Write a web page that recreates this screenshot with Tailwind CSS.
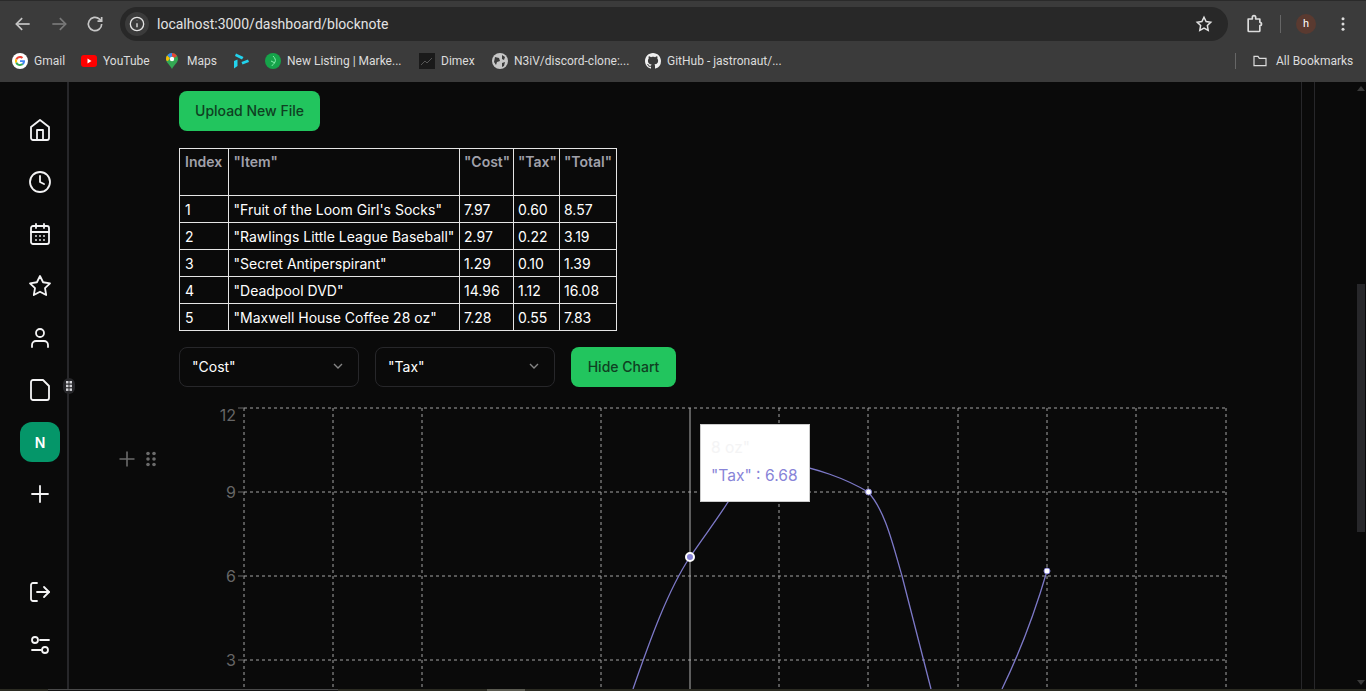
<!DOCTYPE html>
<html lang="en">

<head>
    <meta charset="UTF-8">
    <meta name="viewport" content="width=device-width, initial-scale=1.0">
    <title>Blocknote Dashboard</title>
    <script src="https://cdn.jsdelivr.net/npm/@tailwindcss/browser@4"></script>
</head>

<body class="h-[691px] overflow-hidden bg-[#0a0a0a] font-['Inter',sans-serif]">
    <!-- Browser toolbar -->
    <header class="h-[82px] bg-[#3b3b3b] border-t border-[#2a2a2a] font-['Roboto',sans-serif]">
        <div class="h-[46px] flex items-center">
            <div class="flex items-center gap-[16px] pl-[13px] w-[120px] text-[#c7c7c7]">
                <svg class="w-[20px] h-[20px]" viewBox="0 0 24 24" fill="none" stroke="currentColor" stroke-width="2"><path d="M20 12H5"/><path d="m11 5-7 7 7 7"/></svg>
                <svg class="w-[20px] h-[20px] text-[#7a7a7a]" viewBox="0 0 24 24" fill="none" stroke="currentColor" stroke-width="2"><path d="M4 12h15"/><path d="m13 5 7 7-7 7"/></svg>
                <svg class="w-[20px] h-[20px]" viewBox="0 0 24 24" fill="none" stroke="currentColor" stroke-width="2"><path d="M20 12a8 8 0 1 1-2.500-5.800L20 8.500"/><path d="M20 3.500v5h-5"/></svg>
            </div>
            <div class="w-[1108px] h-[34px] rounded-full bg-[#282828] flex items-center pl-[5px] pr-[15px]">
                <div class="w-[24px] h-[24px] rounded-full bg-[#3b3b3b] flex items-center justify-center text-[#e3e3e3]">
                    <svg class="w-[16px] h-[16px]" viewBox="0 0 24 24" fill="none" stroke="currentColor" stroke-width="2"><circle cx="12" cy="12" r="10"/><path d="M12 11v6"/><path d="M12 7v.5"/></svg>
                </div>
                <span class="ml-[8px] text-[14px] text-[#e3e3e3]">localhost:3000/dashboard/blocknote</span>
                <svg class="ml-auto w-[18px] h-[18px] text-[#e3e3e3]" viewBox="0 0 24 24" fill="none" stroke="currentColor" stroke-width="2"><path d="m12 3 2.800 5.800 6.200.9-4.500 4.400 1.100 6.400-5.600-3-5.600 3 1.100-6.400L3 9.700l6.200-.9z"/></svg>
            </div>
            <div class="flex items-center flex-1 pl-[16px] text-[#dcdcdc]">
                <svg class="w-[20px] h-[20px]" viewBox="0 0 24 24" fill="none" stroke="currentColor" stroke-width="2" stroke-linejoin="round"><path d="M5 6h5V4a2 2 0 0 1 4 0v2h5v4a2 2 0 0 1 0 4v6a1 1 0 0 1-1 1H6a1 1 0 0 1-1-1z"/></svg>
                <div class="w-px h-[18px] bg-[#666] ml-[16px]"></div>
                <div class="w-[20px] h-[20px] rounded-full bg-[#5a3a30] ml-[15px] flex items-center justify-center text-[11px] text-white">h</div>
                <svg class="ml-[18px] w-[18px] h-[18px]" viewBox="0 0 24 24" fill="currentColor"><circle cx="12" cy="5" r="2"/><circle cx="12" cy="12" r="2"/><circle cx="12" cy="19" r="2"/></svg>
            </div>
        </div>

        <!-- Bookmarks bar -->
        <div class="h-[35px] flex items-center pl-[12px] pb-[8px] text-[12px] text-[#dcdcdc] whitespace-nowrap">
            <svg class="w-[16px] h-[16px]" viewBox="0 0 48 48"><circle cx="24" cy="24" r="24" fill="#fff"/><path fill="#ea4335" d="M24 9c4 0 7 1.400 9.500 3.700l-4.300 4.300C27.800 15.700 26 15 24 15c-4 0-7.300 2.700-8.500 6.300l-5-3.900C13 12.500 18 9 24 9z"/><path fill="#4285f4" d="M39 24.500c0-1.200-.1-2-.3-3H24v5.700h8.400c-.4 2-1.500 3.500-3.100 4.600l4.800 3.700c2.900-2.700 4.900-6.500 4.900-11z"/><path fill="#fbbc05" d="M15.500 26.700c-.6-1.800-.6-3.600 0-5.400l-5-3.900c-2 4.100-2 9.100 0 13.200z"/><path fill="#34a853" d="M24 39c4 0 7.500-1.300 10.100-3.500l-4.800-3.700c-1.400.9-3.200 1.500-5.300 1.500-4 0-7.300-2.700-8.500-6.600l-5 3.900C13 35.500 18 39 24 39z"/></svg>
            <span class="ml-[6px] w-[30px]">Gmail</span>
            <svg class="ml-[17px] w-[16px] h-[12px]" viewBox="0 0 16 12"><rect width="16" height="12" rx="3" fill="#f00"/><path d="m6.500 3.500 4 2.500-4 2.500z" fill="#fff"/></svg>
            <span class="ml-[6px] w-[46px]">YouTube</span>
            <svg class="ml-[17px] w-[12px] h-[16px]" viewBox="0 0 12 16"><path d="M6 0a6 6 0 0 1 6 6c0 3.500-4 6-6 10-2-4-6-6.500-6-10a6 6 0 0 1 6-6z" fill="#34a853"/><path d="M1 2.500 4 5 2 8 .3 7.500A6 6 0 0 1 1 2.500z" fill="#fbbc05"/><path d="M1.500 2A6 6 0 0 1 6 0l1 2-3 3z" fill="#4285f4"/><path d="M6 0a6 6 0 0 1 5 3L8 5 6 3z" fill="#ea4335"/><circle cx="6" cy="6" r="2.200" fill="#fff"/></svg>
            <span class="ml-[9px] w-[29px]">Maps</span>
            <svg class="ml-[17px] w-[16px] h-[16px]" viewBox="0 0 16 16" fill="#22d3ee"><path d="M3 .5 10.500 4 9 6.500 2 3z"/><path d="M8.500 9 15 6.500 16 9l-6.500 2.500z"/><path d="M1 8l3.500-1.500V13L1 15.500z"/></svg>
            <svg class="ml-[16px] w-[16px] h-[16px]" viewBox="0 0 16 16"><circle cx="8" cy="8" r="8" fill="#16a34a"/><path d="M8 3c2 2 3 4 2 6s-3 3-3 4M6 8c1 1 3 1 4 2" stroke="#86efac" fill="none"/></svg>
            <span class="ml-[6px] w-[116px]">New Listing | Marke...</span>
            <svg class="ml-[16px] w-[16px] h-[16px]" viewBox="0 0 16 16"><rect width="16" height="16" fill="#1a1a1a"/><path d="M2 12l4-4 2 2 5-5" stroke="#555" fill="none"/></svg>
            <span class="ml-[6px] w-[34px]">Dimex</span>
            <svg class="ml-[17px] w-[16px] h-[16px]" viewBox="0 0 16 16"><circle cx="8" cy="8" r="8" fill="#c7c7c7"/><path d="M3 4l4 1 1 3-3 1-1 3-2-3zM10 2l3 2-1 3-2-1zM10 10l3-1-1 4-2 1z" fill="#3b3b3b"/></svg>
            <span class="ml-[6px] w-[115px]">N3iV/discord-clone:...</span>
            <svg class="ml-[16px] w-[16px] h-[16px]" viewBox="0 0 16 16" fill="#f0f0f0"><path d="M8 0C3.580 0 0 3.580 0 8c0 3.540 2.290 6.530 5.470 7.590.4.070.55-.17.55-.38 0-.19-.01-.82-.01-1.490-2.010.37-2.530-.49-2.690-.94-.09-.23-.48-.94-.82-1.130-.28-.15-.68-.52-.01-.53.63-.01 1.080.58 1.230.82.720 1.210 1.870.870 2.330.66.070-.52.280-.87.510-1.070-1.780-.2-3.640-.89-3.640-3.950 0-.87.310-1.590.820-2.150-.08-.2-.36-1.020.08-2.120 0 0 .67-.21 2.200.82.640-.18 1.320-.27 2-.27s1.360.09 2 .27c1.530-1.040 2.200-.82 2.200-.82.440 1.100.16 1.920.08 2.120.51.560.82 1.270.82 2.150 0 3.070-1.870 3.750-3.650 3.950.29.250.54.730.54 1.480 0 1.070-.01 1.930-.01 2.200 0 .21.150.46.550.38A8.010 8.010 0 0 0 16 8c0-4.420-3.580-8-8-8z"/></svg>
            <span class="ml-[6px]">GitHub - jastronaut/...</span>
            <div class="ml-auto w-px h-[16px] bg-[#666]"></div>
            <svg class="ml-[16px] w-[16px] h-[16px]" viewBox="0 0 24 24" fill="none" stroke="currentColor" stroke-width="1.800"><path d="M3 5h6l2 3h10v11H3z"/></svg>
            <span class="ml-[8px] w-[76px] mr-[14px]">All Bookmarks</span>
        </div>
    </header>

    <!-- App -->
    <div class="relative flex h-[609px] overflow-hidden bg-[#0a0a0a]">
        <aside class="w-[69px] shrink-0 border-r-2 border-[#27272a] flex flex-col items-center pl-[13px] pt-[36px] text-[#f4f4f5] relative">
            <nav class="flex flex-col items-center gap-[28px]">
                <svg class="w-[24px] h-[24px]" viewBox="0 0 24 24" fill="none" stroke="currentColor" stroke-width="1.800" stroke-linecap="round" stroke-linejoin="round"><path d="m3 9 9-7 9 7v11a2 2 0 0 1-2 2H5a2 2 0 0 1-2-2z"/><path d="M9 22V12h6v10"/></svg>
                <svg class="w-[24px] h-[24px]" viewBox="0 0 24 24" fill="none" stroke="currentColor" stroke-width="1.800" stroke-linecap="round" stroke-linejoin="round"><circle cx="12" cy="12" r="10"/><path d="M12 6v6l4 2"/></svg>
                <svg class="w-[24px] h-[24px]" viewBox="0 0 24 24" fill="none" stroke="currentColor" stroke-width="1.800" stroke-linecap="round" stroke-linejoin="round"><rect x="3" y="4" width="18" height="18" rx="2"/><path d="M8 2v4M16 2v4M3 10h18M8 14h.01M12 14h.01M16 14h.01M8 18h.01M12 18h.01M16 18h.01"/></svg>
                <svg class="w-[24px] h-[24px]" viewBox="0 0 24 24" fill="none" stroke="currentColor" stroke-width="1.800" stroke-linecap="round" stroke-linejoin="round"><path d="m12 2 3.090 6.260L22 9.270l-5 4.870 1.180 6.880L12 17.770l-6.180 3.250L7 14.140 2 9.270l6.910-1.010z"/></svg>
                <svg class="w-[24px] h-[24px]" viewBox="0 0 24 24" fill="none" stroke="currentColor" stroke-width="1.800" stroke-linecap="round" stroke-linejoin="round"><path d="M20 21v-2a4 4 0 0 0-4-4H8a4 4 0 0 0-4 4v2"/><circle cx="12" cy="7" r="4"/></svg>
                <svg class="w-[24px] h-[24px]" viewBox="0 0 24 24" fill="none" stroke="currentColor" stroke-width="1.800" stroke-linecap="round" stroke-linejoin="round"><path d="M3 4a2 2 0 0 1 2-2h10l6 6v12a2 2 0 0 1-2 2H5a2 2 0 0 1-2-2z"/></svg>
                <div class="w-[40px] h-[40px] -my-[8px] rounded-xl bg-[#059669] flex items-center justify-center text-[14px] font-semibold text-white">N</div>
                <svg class="w-[24px] h-[24px]" viewBox="0 0 24 24" fill="none" stroke="currentColor" stroke-width="1.800" stroke-linecap="round"><path d="M4 12h16M12 4v16"/></svg>
            </nav>
            <div class="mt-auto mb-[34px] flex flex-col items-center gap-[29px]">
                <svg class="w-[24px] h-[24px]" viewBox="0 0 24 24" fill="none" stroke="currentColor" stroke-width="1.800" stroke-linecap="round" stroke-linejoin="round"><path d="M9 21H5a2 2 0 0 1-2-2V5a2 2 0 0 1 2-2h4"/><path d="m16 17 5-5-5-5"/><path d="M21 12H9"/></svg>
                <svg class="w-[24px] h-[24px]" viewBox="0 0 24 24" fill="none" stroke="currentColor" stroke-width="1.800" stroke-linecap="round" stroke-linejoin="round"><path d="M21 7h-9M13 17H4"/><circle cx="17" cy="17" r="3"/><circle cx="7" cy="7" r="3"/></svg>
            </div>
        </aside>

        <!-- resize handle -->
        <div class="absolute left-[63px] top-[296px] w-[12px] h-[16px] rounded-full bg-[#27272a] flex items-center justify-center">
            <svg class="w-[6px] h-[10px]" viewBox="0 0 6 10" fill="#d4d4d8"><rect width="2.500" height="2.500"/><rect x="3.500" width="2.500" height="2.500"/><rect y="3.700" width="2.500" height="2.500"/><rect x="3.500" y="3.700" width="2.500" height="2.500"/><rect y="7.400" width="2.500" height="2.500"/><rect x="3.500" y="7.400" width="2.500" height="2.500"/></svg>
        </div>

        <main class="flex-1 pl-[110px] pt-[9px] text-[14px] text-white">
            <button class="block h-[40px] w-[141px] pb-[2px] rounded-lg bg-[#22c55e] font-medium text-[#0f4022]">Upload New File</button>

            <table class="mt-[17px] border-collapse table-fixed w-[438px]">
                <thead>
                    <tr class="h-[47px] align-top text-left font-semibold text-[#a1a1aa]">
                        <th class="w-[49px] border border-[#e5e5e5] pl-[5px] pt-[2px] font-semibold">Index</th>
                        <th class="w-[231px] border border-[#e5e5e5] pl-[4.500px] pt-[2px] font-semibold">"Item"</th>
                        <th class="w-[54px] border border-[#e5e5e5] pl-[4px] pt-[2px] font-semibold">"Cost"</th>
                        <th class="w-[46px] border border-[#e5e5e5] pl-[4px] pt-[2px] font-semibold">"Tax"</th>
                        <th class="w-[57px] border border-[#e5e5e5] pl-[4px] pt-[2px] font-semibold">"Total"</th>
                    </tr>
                </thead>
                <tbody class="font-normal">
                    <tr class="h-[27px]">
                        <td class="border border-[#e5e5e5] pl-[5px]">1</td>
                        <td class="border border-[#e5e5e5] pl-[4.500px]">"Fruit of the Loom Girl's Socks"</td>
                        <td class="border border-[#e5e5e5] pl-[4px]">7.97</td>
                        <td class="border border-[#e5e5e5] pl-[4px]">0.60</td>
                        <td class="border border-[#e5e5e5] pl-[4px]">8.57</td>
                    </tr>
                    <tr class="h-[27px]">
                        <td class="border border-[#e5e5e5] pl-[5px]">2</td>
                        <td class="border border-[#e5e5e5] pl-[4.500px] whitespace-nowrap">"Rawlings Little League Baseball"</td>
                        <td class="border border-[#e5e5e5] pl-[4px]">2.97</td>
                        <td class="border border-[#e5e5e5] pl-[4px]">0.22</td>
                        <td class="border border-[#e5e5e5] pl-[4px]">3.19</td>
                    </tr>
                    <tr class="h-[27px]">
                        <td class="border border-[#e5e5e5] pl-[5px]">3</td>
                        <td class="border border-[#e5e5e5] pl-[4.500px]">"Secret Antiperspirant"</td>
                        <td class="border border-[#e5e5e5] pl-[4px]">1.29</td>
                        <td class="border border-[#e5e5e5] pl-[4px]">0.10</td>
                        <td class="border border-[#e5e5e5] pl-[4px]">1.39</td>
                    </tr>
                    <tr class="h-[27px]">
                        <td class="border border-[#e5e5e5] pl-[5px]">4</td>
                        <td class="border border-[#e5e5e5] pl-[4.500px]">"Deadpool DVD"</td>
                        <td class="border border-[#e5e5e5] pl-[4px]">14.96</td>
                        <td class="border border-[#e5e5e5] pl-[4px]">1.12</td>
                        <td class="border border-[#e5e5e5] pl-[4px]">16.08</td>
                    </tr>
                    <tr class="h-[27px]">
                        <td class="border border-[#e5e5e5] pl-[5px]">5</td>
                        <td class="border border-[#e5e5e5] pl-[4.500px]">"Maxwell House Coffee 28 oz"</td>
                        <td class="border border-[#e5e5e5] pl-[4px]">7.28</td>
                        <td class="border border-[#e5e5e5] pl-[4px]">0.55</td>
                        <td class="border border-[#e5e5e5] pl-[4px]">7.83</td>
                    </tr>
                </tbody>
            </table>

            <div class="mt-[16px] flex gap-[16px]">
                <div class="w-[180px] h-[40px] pb-[2px] rounded-lg border border-[#27272a] flex items-center justify-between pl-[12px] pr-[12px]">
                    <span>"Cost"</span>
                    <svg class="w-[16px] h-[16px] opacity-50" viewBox="0 0 24 24" fill="none" stroke="currentColor" stroke-width="2"><path d="m6 9 6 6 6-6"/></svg>
                </div>
                <div class="w-[180px] h-[40px] pb-[2px] rounded-lg border border-[#27272a] flex items-center justify-between pl-[12px] pr-[12px]">
                    <span>"Tax"</span>
                    <svg class="w-[16px] h-[16px] opacity-50" viewBox="0 0 24 24" fill="none" stroke="currentColor" stroke-width="2"><path d="m6 9 6 6 6-6"/></svg>
                </div>
                <button class="h-[40px] w-[105px] pb-[2px] rounded-lg bg-[#22c55e] font-medium text-[#0f4022]">Hide Chart</button>
            </div>
        </main>

        <!-- block handle -->
        <div class="absolute left-[117px] top-[367px] flex items-center gap-[9px] text-[#6b6b6b]">
            <svg class="w-[20px] h-[20px]" viewBox="0 0 20 20" fill="none" stroke="currentColor" stroke-width="1.600"><path d="M2.500 10h15M10 2.500v15"/></svg>
            <svg class="w-[10px] h-[16px]" viewBox="0 0 10 16" fill="currentColor"><circle cx="2" cy="2.500" r="1.800"/><circle cx="8" cy="2.500" r="1.800"/><circle cx="2" cy="8" r="1.800"/><circle cx="8" cy="8" r="1.800"/><circle cx="2" cy="13.500" r="1.800"/><circle cx="8" cy="13.500" r="1.800"/></svg>
        </div>

        <!-- chart, free canvas -->
        <svg class="absolute left-[200px] top-[318px]" width="1040" height="291" viewBox="200 400 1040 291" font-family="Inter, sans-serif">
            <g stroke="#a3a3a3" stroke-dasharray="3 3" fill="none">
                <path d="M244 408H1226M244 492H1226M244 576H1226M244 660H1226"/>
                <path d="M244 408V689M333 408V689M422 408V689M601 408V689M779 408V689M868 408V689M958 408V689M1047 408V689M1136 408V689M1226 408V689"/>
            </g>
            <path d="M690 408V689" stroke="#b0b0b0"/>
            <path d="M238 408h6M238 492h6M238 576h6M238 660h6" stroke="#666"/>
            <g fill="#666" font-size="16" text-anchor="end">
                <text x="236" y="421">12</text>
                <text x="236" y="498">9</text>
                <text x="236" y="582">6</text>
                <text x="236" y="666">3</text>
            </g>
            <path d="M633 689C650 640 668 590 690 557C705 535 718 518 728 502C745 478 770 462 790 464C815 468 845 478 868 492C885 510 893 545 902 576C911 612 921 650 931 689" stroke="#7d79c8" stroke-width="1.300" fill="none"/>
            <path d="M1002 689C1020 652 1035 612 1047 571" stroke="#7d79c8" stroke-width="1.300" fill="none"/>
            <circle cx="868.500" cy="492" r="3" fill="#fff" stroke="#8884d8"/>
            <circle cx="1047" cy="571" r="3" fill="#fff" stroke="#8884d8"/>
            <circle cx="690" cy="557" r="4" fill="#8884d8" stroke="#fff" stroke-width="2"/>
        </svg>

        <!-- tooltip -->
        <div class="absolute left-[700px] top-[342px] w-[110px] h-[78px] bg-white border border-[#ccc] pl-[10px] pt-[11px] text-[15.600px] leading-[24px] whitespace-nowrap">
            <p class="text-[#f4f4f5]">8 oz"</p>
            <p class="mt-[4px] text-[#8884d8]">"Tax" : 6.68</p>
        </div>

        <!-- right rails and page scrollbar -->
        <div class="absolute left-[1301px] top-0 h-full w-px bg-[#27272a]"></div>
        <div class="absolute left-[1314px] top-0 h-full w-px bg-[#27272a]"></div>
        <div class="absolute left-[1357px] top-[202px] w-[8px] h-[248px] bg-[#27272a]"></div>
        <svg class="absolute left-[1357px] top-[4px] w-[8px] h-[5px]" viewBox="0 0 8 5" fill="#3a3a3a"><path d="M4 0l4 5H0z"/></svg>
        <svg class="absolute left-[1357px] top-[598px] w-[8px] h-[5px]" viewBox="0 0 8 5" fill="#3a3a3a"><path d="M4 5l4-5H0z"/></svg>

        <!-- horizontal scrollbar -->
        <div class="absolute left-0 bottom-0 w-full h-[2px] bg-[#2b2b22]">
            <div class="absolute left-[48px] top-0 w-[290px] h-full border-t border-[#4a4a4a] bg-[#161616]"></div>
            <div class="absolute left-[487px] top-0 w-[38px] h-full bg-[#5a5a50]"></div>
        </div>
    </div>
</body>

</html>
